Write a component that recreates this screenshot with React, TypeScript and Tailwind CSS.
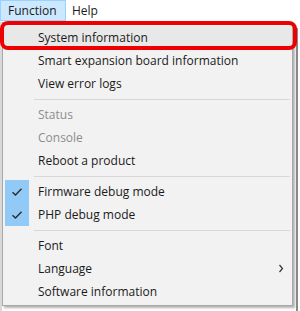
import React from 'react';

type Item = { label: string; disabled?: boolean; checked?: boolean; submenu?: boolean } | 'sep';

const items: Item[] = [
  { label: 'System information' },
  { label: 'Smart expansion board information' },
  { label: 'View error logs' },
  'sep',
  { label: 'Status', disabled: true },
  { label: 'Console', disabled: true },
  { label: 'Reboot a product' },
  'sep',
  { label: 'Firmware debug mode', checked: true },
  { label: 'PHP debug mode', checked: true },
  'sep',
  { label: 'Font' },
  { label: 'Language', submenu: true },
  { label: 'Software information' },
];

const Check = () => (
  <svg width="12" height="10" viewBox="0 0 12 10" fill="none">
    <path d="M1.5 5.2 L4.5 8 L10.5 1.8" stroke="#2b2b2b" strokeWidth="1.4" />
  </svg>
);

const Chevron = () => (
  <svg width="6" height="9" viewBox="0 0 6 9" fill="none">
    <path d="M1.5 1 L4.5 4.5 L1.5 8" stroke="#333" strokeWidth="1.2" />
  </svg>
);

export default function App() {
  return (
    <div className="relative w-[300px] h-[311px] bg-white overflow-hidden font-['Open_Sans','Noto_Sans',sans-serif] text-[12px] text-[#1a1a1a]">
      {/* Menu bar */}
      <div className="flex h-[21px] items-stretch">
        <div className="flex items-center px-[7px] w-[66px] bg-[#cce8ff] border border-[#99d1ff]">Function</div>
        <div className="flex items-center px-[6px]">Help</div>
      </div>

      {/* Background window edges */}
      <div className="absolute left-[296px] top-[28px] w-[2px] h-[283px] bg-[#8a8a8a]" />
      <div className="absolute left-0 top-[22px] w-[2px] h-[289px] bg-[#d9d9d9]" />

      {/* Dropdown */}
      <div className="absolute left-[2px] top-[22px] w-[291px] bg-[#f2f2f2] border border-[#a8a8a8] shadow-[2px_2px_2px_rgba(0,0,0,0.3)] pt-[3px] pb-[2px] flex flex-col">
        {items.map((it, i) =>
          it === 'sep' ? (
            <div key={i} className="h-[8px] flex items-center pl-[31px] pr-[2px]">
              <div className="h-px w-full bg-[#d7d7d7]" />
            </div>
          ) : (
            <div
              key={i}
              className={`h-[23px] flex items-stretch pr-[8px] ${i === 0 ? 'bg-[#e8e8e8]' : ''} ${it.disabled ? 'text-[#8d8d8d]' : ''}`}
            >
              <div className="w-[35px] flex items-stretch pl-[2px]">
                {it.checked && (
                  <div className="w-[24px] bg-[#91c9f7] flex items-center justify-center">
                    <Check />
                  </div>
                )}
              </div>
              <span className="flex-1 flex items-center">{it.label}</span>
              {it.submenu && (
                <span className="flex items-center">
                  <Chevron />
                </span>
              )}
            </div>
          )
        )}
      </div>

      {/* Red highlight */}
      <div className="absolute left-0 top-[21px] w-[297px] h-[29px] rounded-[8px] border-[4px] border-[#ee0000]" />
    </div>
  );
}
